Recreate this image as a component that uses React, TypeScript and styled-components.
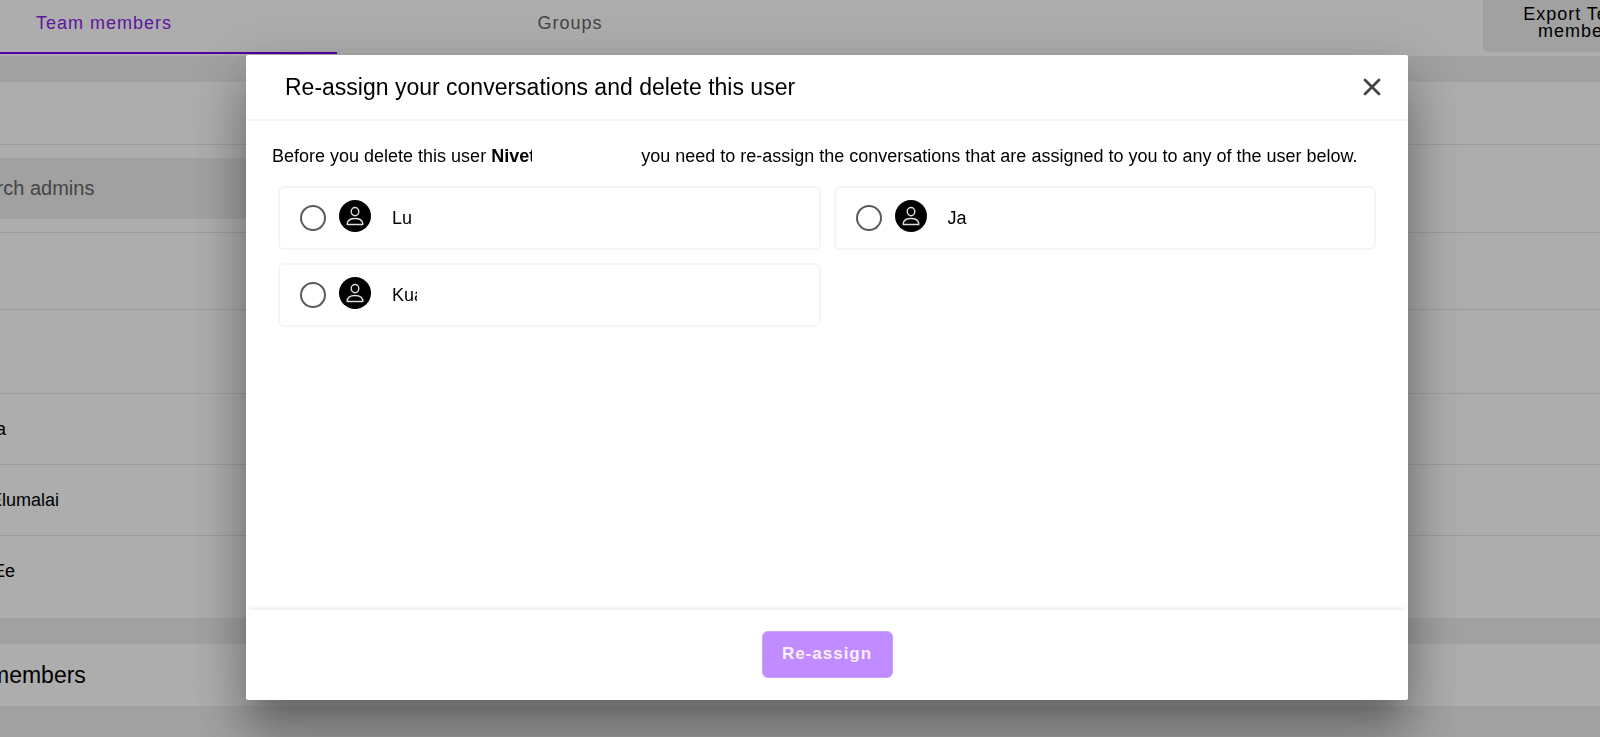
import React, { useState } from "react";
import styled, { createGlobalStyle } from "styled-components";

const GlobalStyle = createGlobalStyle`
  * { box-sizing: border-box; }
  body {
    margin: 0;
    background: #eeeeee;
    color: #000;
    font-family: "Liberation Sans", Arial, sans-serif;
    font-size: 18px;
    line-height: 20px;
  }
  button, input { font-family: inherit; }
`;

const Page = styled.main`
  min-height: 100vh;
  overflow: hidden;
`;

const TopBar = styled.header`
  display: flex;
  height: 56px;
  margin-bottom: 26px;
  margin-left: -129px;
  margin-right: -75px;
  background: #fff;
`;

const Tab = styled.button<{ $active?: boolean }>`
  width: 466px;
  height: 54px;
  padding: 0 0 5px;
  border: 0;
  border-bottom: 2px solid ${(p) => (p.$active ? "#7a00f0" : "transparent")};
  background: none;
  color: ${(p) => (p.$active ? "#8a25e8" : "#666")};
  font-size: 18px;
  letter-spacing: 1px;
`;

const ExportButton = styled.button`
  width: 192px;
  height: 58px;
  margin: -6px 0 0 auto;
  padding: 0 30px;
  border: 0;
  border-radius: 6px;
  background: #eeeeee;
  color: #000;
  font-size: 18px;
  line-height: 17px;
  letter-spacing: 1px;
`;

const Panel = styled.section`
  margin-bottom: 26px;
  background: #fff;
`;

const List = styled.ul`
  margin: 0;
  padding: 0 0 12px;
  list-style: none;
`;

const Row = styled.li<{ $height: number }>`
  display: flex;
  align-items: center;
  height: ${(p) => p.$height}px;
  & + & { border-top: 1px solid #e8e8e8; }
`;

const Search = styled.input`
  width: 460px;
  height: 61px;
  margin-left: -60px;
  padding: 0 0 0 21px;
  border: 0;
  background: #eeeeee;
  font-size: 20px;
  &::placeholder { color: #666; opacity: 1; }
`;

const MemberName = styled.span<{ $end: number }>`
  display: flex;
  justify-content: flex-end;
  width: ${(p) => p.$end}px;
`;

const PanelTitle = styled.h2`
  display: flex;
  align-items: center;
  height: 62px;
  margin: 0 0 0 -10px;
  font-size: 23px;
  font-weight: 400;
`;

const Backdrop = styled.div`
  position: fixed;
  inset: 0;
  display: flex;
  align-items: flex-start;
  padding: 55px 192px 37px 246px;
  background: rgba(0, 0, 0, 0.32);
`;

const Dialog = styled.section`
  flex: 1;
  border-radius: 2px;
  background: #fff;
  box-shadow:
    0 14px 19px -9px rgba(0, 0, 0, 0.12),
    0 34px 52px 0 rgba(0, 0, 0, 0.3),
    0 12px 60px 10px rgba(0, 0, 0, 0.12);
`;

const DialogHeader = styled.header`
  display: flex;
  align-items: center;
  justify-content: space-between;
  height: 66px;
  padding: 0 22px 0 39px;
  border-bottom: 2px solid #f4f4f4;
`;

const DialogTitle = styled.h1`
  margin: 0;
  font-size: 23px;
  line-height: 28px;
  font-weight: 400;
`;

const CloseButton = styled.button`
  display: flex;
  padding: 4px;
  border: 0;
  background: none;
  color: #444;
`;

const DialogBody = styled.div`
  min-height: 489px;
  padding: 25px 26px;
`;

const Message = styled.p`
  display: flex;
  margin: 0 0 20px;
  white-space: pre;
`;

const UserName = styled.strong`
  width: 150px;
`;

const Clip = styled.span<{ $width: number }>`
  display: block;
  width: ${(p) => p.$width}px;
  overflow: hidden;
  white-space: nowrap;
`;

const UserGrid = styled.div`
  display: grid;
  grid-template-columns: 1fr 1fr;
  gap: 13px;
  margin: 0 6px;
`;

const UserCard = styled.label`
  display: flex;
  align-items: center;
  height: 64px;
  padding: 0 20px;
  border: 2px solid #f5f5f5;
  border-radius: 6px;
`;

const Radio = styled.input`
  appearance: none;
  width: 26px;
  height: 26px;
  margin: 0 13px 0 0;
  border: 2px solid #5a5a5a;
  border-radius: 50%;
  &:checked { box-shadow: inset 0 0 0 5px #fff; background: #7a00f0; }
`;

const Avatar = styled.svg`
  margin: 0 21px 4px 0;
`;

const DialogFooter = styled.footer`
  display: flex;
  justify-content: center;
  padding: 21px 0 22px;
  box-shadow: 0 -4px 6px -3px rgba(0, 0, 0, 0.1);
`;

const ReassignButton = styled.button`
  width: 131px;
  height: 47px;
  padding: 0 0 2px;
  border: 1px solid #cba0ff;
  border-radius: 6px;
  background: #c18cff;
  color: #f8f0ff;
  font-size: 17px;
  font-weight: 700;
  letter-spacing: 1px;
`;

const rows = [
  { height: 77, name: "", end: 0 },
  { height: 84, name: "", end: 0 },
  { height: 71, name: "a", end: 6 },
  { height: 71, name: "Elumalai", end: 59 },
  { height: 71, name: "Ee", end: 15 },
];

const users = [
  { name: "Lu", width: 21 },
  { name: "Ja", width: 21 },
  { name: "Kua", width: 25 },
];

function PersonIcon() {
  return (
    <Avatar width="32" height="32" viewBox="0 0 32 32" aria-hidden="true">
      <circle cx="16" cy="16" r="16" fill="#000" />
      <g fill="none" stroke="#ddd" strokeWidth="1.4" strokeLinejoin="round">
        <ellipse cx="16" cy="11.6" rx="3.8" ry="4.1" />
        <path d="M8.2 24.5c0-3.8 3.2-6 7.8-6s7.8 2.2 7.8 6z" />
      </g>
    </Avatar>
  );
}

export default function App() {
  const [selected, setSelected] = useState<string | null>(null);

  return (
    <>
      <GlobalStyle />
      <Page>
        <TopBar>
          <Tab $active>Team members</Tab>
          <Tab>Groups</Tab>
          <ExportButton>Export Team members</ExportButton>
        </TopBar>
        <Panel>
          <List>
            <Row $height={62} />
            <Row $height={88}>
              <Search type="search" placeholder="Search admins" aria-label="Search admins" />
            </Row>
            {rows.map((row, i) => (
              <Row key={i} $height={row.height}>
                <MemberName $end={row.end}>{row.name}</MemberName>
              </Row>
            ))}
          </List>
        </Panel>
        <Panel>
          <PanelTitle>members</PanelTitle>
        </Panel>
      </Page>

      <Backdrop>
        <Dialog role="dialog" aria-modal="true" aria-labelledby="dialog-title">
          <DialogHeader>
            <DialogTitle id="dialog-title">
              Re-assign your conversations and delete this user
            </DialogTitle>
            <CloseButton aria-label="Close">
              <svg width="20" height="20" viewBox="0 0 20 20" aria-hidden="true">
                <path
                  d="M3 3l14 14M17 3L3 17"
                  stroke="currentColor"
                  strokeWidth="2.8"
                  strokeLinecap="round"
                />
              </svg>
            </CloseButton>
          </DialogHeader>
          <DialogBody>
            <Message>
              <span>Before you delete this user </span>
              <UserName>
                <Clip $width={41}>Nivet</Clip>
              </UserName>
              <span>
                you need to re-assign the conversations that are assigned to you to any of the user
                below.
              </span>
            </Message>
            <UserGrid role="radiogroup" aria-label="Users">
              {users.map((user) => (
                <UserCard key={user.name}>
                  <Radio
                    type="radio"
                    name="assignee"
                    checked={selected === user.name}
                    onChange={() => setSelected(user.name)}
                  />
                  <PersonIcon />
                  <Clip $width={user.width}>{user.name}</Clip>
                </UserCard>
              ))}
            </UserGrid>
          </DialogBody>
          <DialogFooter>
            <ReassignButton>Re-assign</ReassignButton>
          </DialogFooter>
        </Dialog>
      </Backdrop>
    </>
  );
}
